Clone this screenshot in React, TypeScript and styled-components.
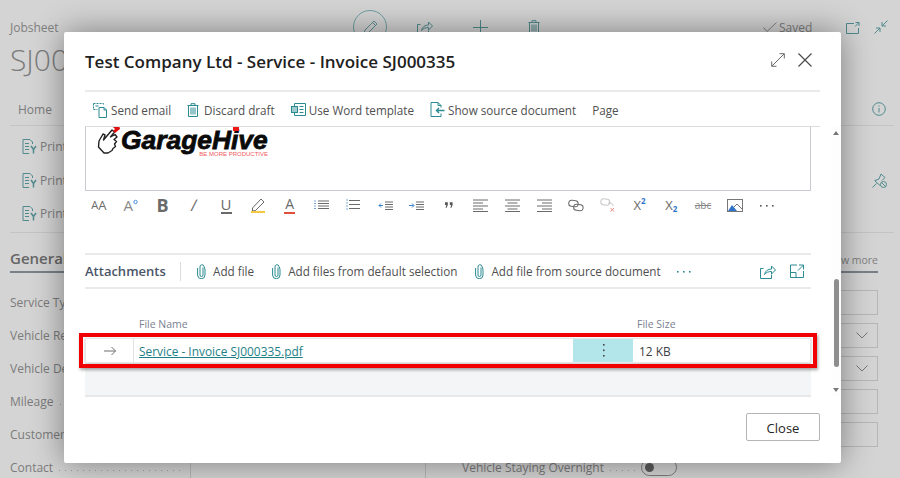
import React from "react";
import styled, { createGlobalStyle } from "styled-components";

const TEAL = "#2b8a92";
const MUTED_TEAL = "#4f8a8e";
const GREY = "#6a6a6a";

const GlobalStyle = createGlobalStyle`
  html, body {
    margin: 0;
    padding: 0;
    background: #d4d4d4;
  }
  body {
    font-family: "Open Sans", "Noto Sans", sans-serif;
    width: 900px;
    height: 478px;
    overflow: hidden;
  }
  * {
    box-sizing: border-box;
  }
`;

/* dimmed page behind the dialog */
const Page = styled.div`
  width: 900px;
  height: 478px;
  overflow: hidden;
  padding: 0 0 0 10px;
  color: #7b7b7b;
  font-size: 12px;
`;

const TopBar = styled.div`
  height: 54px;
  display: flex;
  align-items: center;
`;

const Crumb = styled.div`
  width: 343px;
  color: #808080;
`;

const EditCircle = styled.div`
  width: 34px;
  height: 34px;
  border-radius: 50%;
  border: 1px solid #6fa0a3;
  display: flex;
  align-items: center;
  justify-content: center;
  margin-right: 30px;
`;

const TopIcon = styled.div<{ $gap: number }>`
  display: flex;
  margin-right: ${(p) => p.$gap}px;
`;

const SavedText = styled.div`
  display: flex;
  align-items: center;
  gap: 2px;
  color: #808080;
  margin-right: 34px;
`;

const DocTitle = styled.div`
  font-size: 30px;
  line-height: 30px;
  font-weight: 300;
  color: #7c7c7c;
  height: 38px;
  margin-top: -9px;
`;

const Tabs = styled.div`
  height: 43px;
  width: 884px;
  border-bottom: 1px solid #c4c4c4;
  display: flex;
  align-items: center;
  justify-content: space-between;
  padding: 10px 8px 0 8px;
`;

const PrintList = styled.div`
  height: 107px;
  width: 884px;
  border-bottom: 1px solid #c4c4c4;
  display: flex;
  align-items: flex-start;
  justify-content: space-between;
  padding: 4px 7px 0 12px;
`;

const PrintCol = styled.div`
  display: flex;
  flex-direction: column;
`;

const PrintRow = styled.div`
  height: 33.5px;
  display: flex;
  align-items: center;
  gap: 3px;
`;

const PinWrap = styled.div`
  padding-top: 43px;
  display: flex;
`;

const SectionHead = styled.div`
  width: 868px;
  height: 40px;
  display: flex;
  justify-content: space-between;
  align-items: flex-end;
`;

const SectionTitle = styled.div`
  font-size: 15px;
  font-weight: 600;
  color: #666;
  border-bottom: 2px solid #7a808a;
  height: 31px;
  padding-top: 6px;
  width: 60px;
  white-space: nowrap;
`;

const ShowMore = styled.div`
  font-size: 10.5px;
  color: #808080;
  border-bottom: 2px solid #7a808a;
  height: 26px;
  padding-top: 6px;
`;

const FormGrid = styled.div`
  display: grid;
  grid-template-columns: 416px 416px;
  grid-auto-rows: 33px;
  column-gap: 36px;
  width: 868px;
  margin-top: 13px;
`;

const Field = styled.div`
  display: flex;
  align-items: center;
  height: 33px;
`;

const FieldLabel = styled.div`
  white-space: nowrap;
  flex: none;
`;

const Dots = styled.div`
  flex: 1;
  height: 1px;
  margin: 5px 6px 0;
  background: repeating-linear-gradient(90deg, #a0a0a0 0 1px, transparent 1px 6px);
`;

const Input = styled.div`
  height: 25px;
  width: 236px;
  flex: none;
  border: 1px solid #b7b7b7;
  display: flex;
  align-items: center;
  justify-content: flex-end;
  padding-right: 9px;
`;

const Toggle = styled.div`
  width: 36px;
  height: 17px;
  border: 1px solid #7c7c7c;
  border-radius: 9px;
  margin-right: 201px;
  padding: 3px;
  flex: none;
`;

const Knob = styled.div`
  width: 9px;
  height: 9px;
  border-radius: 50%;
  background: #5c5c5c;
`;

/* dialog */
const Dialog = styled.div`
  position: absolute;
  left: 64px;
  top: 32px;
  width: 777px;
  height: 431px;
  background: #fff;
  border-radius: 2px;
  box-shadow: 0 0 32px rgba(0, 0, 0, 0.42);
  display: flex;
  flex-direction: column;
`;

const DialogHead = styled.div`
  height: 60px;
  margin: 0 21px;
  display: flex;
  align-items: center;
  justify-content: space-between;
  border-bottom: 2px solid #eaeaea;
`;

const DialogTitle = styled.div`
  font-size: 17px;
  font-weight: 600;
  color: #212121;
  white-space: nowrap;
`;

const HeadIcons = styled.div`
  display: flex;
  align-items: center;
  gap: 13px;
  padding: 0 8px 2px 0;
`;

const ActionBar = styled.div`
  height: 35px;
  margin: 0 21px;
  padding: 1px 0 0 7px;
  display: flex;
  align-items: center;
  gap: 16px;
  border-bottom: 1px solid #dcdcdc;
`;

const Action = styled.div<{ $gap?: number }>`
  display: flex;
  align-items: center;
  gap: ${(p) => p.$gap ?? 3}px;
  font-size: 11.7px;
  color: #505050;
  white-space: nowrap;
`;

const ScrollArea = styled.div`
  position: relative;
  height: 269px;
  padding: 0 30px 0 21px;
  flex: none;
`;

const Track = styled.div`
  position: absolute;
  right: 0;
  top: 0;
  bottom: 0;
  width: 10px;
  background: #fdfdfd;
`;

const ThumbBar = styled.div`
  position: absolute;
  left: 3px;
  top: 152px;
  width: 5px;
  height: 88px;
  border-radius: 3px;
  background: #8e8e8e;
`;

const TrackArrow = styled.div<{ $up?: boolean }>`
  position: absolute;
  left: 2px;
  ${(p) => (p.$up ? "top: 4px;" : "bottom: 4px;")}
  width: 0;
  height: 0;
  border-left: 3px solid transparent;
  border-right: 3px solid transparent;
  ${(p) =>
    p.$up ? "border-bottom: 4px solid #777;" : "border-top: 4px solid #777;"}
`;

const Editor = styled.div`
  height: 64px;
  border: 1px solid #c9c9cf;
  border-top: 0;
  padding-left: 11px;
  display: flex;
  align-items: flex-start;
`;

const Logo = styled.div`
  display: flex;
  align-items: flex-start;
`;

const LogoText = styled.div`
  position: relative;
  width: 147px;
  margin-left: -1px;
`;

const LogoWord = styled.div`
  font-family: "Liberation Sans", sans-serif;
  font-style: italic;
  font-weight: 700;
  font-size: 26.4px;
  line-height: 22px;
  margin-top: 2px;
  color: #0a0a0a;
  -webkit-text-stroke: 0.8px #0a0a0a;
  white-space: nowrap;
`;

const LogoDot = styled.div`
  position: absolute;
  left: 112px;
  top: 0;
  width: 6px;
  height: 4px;
  background: #f01616;
`;

const LogoTag = styled.div`
  font-family: "Liberation Sans", sans-serif;
  font-size: 6px;
  line-height: 6px;
  color: #f0585c;
  text-align: right;
  white-space: nowrap;
`;

const FormatBar = styled.div`
  display: flex;
  height: 28px;
  align-items: center;
  margin-left: -2px;
`;

const FormatCell = styled.div`
  width: 31.8px;
  height: 20px;
  flex: none;
  display: flex;
  align-items: center;
  justify-content: center;
`;

const Glyph = styled.span<{ $size: number; $weight?: number; $color?: string }>`
  font-size: ${(p) => p.$size}px;
  font-weight: ${(p) => p.$weight ?? 400};
  color: ${(p) => p.$color ?? GREY};
  line-height: 16px;
`;

const SlashGlyph = styled(Glyph)`
  transform: skewX(-8deg);
`;

const Stacked = styled.span`
  display: flex;
  flex-direction: column;
  align-items: center;
  line-height: 14px;
`;

const GlyphBar = styled.span<{ $color: string; $w: number }>`
  display: block;
  width: ${(p) => p.$w}px;
  height: 2px;
  background: ${(p) => p.$color};
`;

const Row = styled.span`
  display: flex;
  align-items: flex-end;
`;

const SmallBlue = styled.span<{ $low?: boolean }>`
  font-size: 8px;
  font-weight: 700;
  line-height: 8px;
  color: #2f74c9;
  align-self: ${(p) => (p.$low ? "flex-end" : "flex-start")};
`;

const StrikeGlyph = styled.span`
  font-size: 10px;
  line-height: 12px;
  color: #858585;
  text-decoration: line-through;
`;

const AttachSection = styled.div`
  margin-top: 34px;
  border-top: 2px solid #eaeaea;
`;

const AttachBar = styled.div`
  height: 34px;
  display: flex;
  align-items: center;
  border-bottom: 2px solid #eaeaea;
`;

const AttachTitle = styled.div`
  font-size: 13px;
  font-weight: 600;
  color: #4a5568;
  white-space: nowrap;
  width: 96px;
  border-right: 1px solid #dcdcdc;
  line-height: 19px;
  margin-right: 16px;
`;

const AttachItem = styled(Action)`
  margin-right: 18px;
`;

const MoreDots = styled.div`
  display: flex;
  margin-left: -2px;
`;

const BarRight = styled.div`
  margin-left: auto;
  display: flex;
  gap: 14px;
  padding-right: 7px;
`;

const ColumnHead = styled.div`
  height: 49px;
  display: grid;
  grid-template-columns: 54px 498px 1fr;
  font-size: 10.5px;
  color: #7a8190;
  align-items: end;
  padding-bottom: 7px;
`;

const HeadCell = styled.div`
  white-space: nowrap;
`;

const FileRow = styled.div`
  position: relative;
  height: 25px;
  display: grid;
  grid-template-columns: 48px 439px 60px 1fr;
  background: #fff;
  border: 1px solid #e6e6e6;
  font-size: 11.9px;
  box-shadow: 0 1px 3px rgba(0, 0, 0, 0.2);
`;

const ArrowCell = styled.div`
  display: flex;
  align-items: center;
  justify-content: center;
  border-right: 1px solid #e2e2e2;
`;

const NameCell = styled.div`
  display: flex;
  align-items: center;
  padding-left: 5px;
`;

const FileLink = styled.a`
  color: #1f7f87;
  text-decoration: underline;
  white-space: nowrap;
`;

const MenuCell = styled.div`
  background: #b2e6ea;
  display: flex;
  align-items: center;
  justify-content: center;
`;

const SizeCell = styled.div`
  display: flex;
  align-items: center;
  padding-left: 6px;
  color: #404040;
`;

/* red annotation drawn on top of the row */
const Highlight = styled.div`
  position: absolute;
  left: -7px;
  top: -6px;
  right: -7px;
  bottom: -6px;
  border: 4px solid #f00000;
  box-shadow: 1px 2px 3px rgba(0, 0, 0, 0.35);
  pointer-events: none;
`;

const EmptyRow = styled.div`
  height: 34px;
  background: #f4f5f6;
  border-bottom: 2px solid #e8e8e8;
`;

const DialogFoot = styled.div`
  flex: 1;
  display: flex;
  justify-content: flex-end;
  align-items: flex-start;
  padding: 17px 21px 0 0;
`;

const CloseButton = styled.button`
  width: 74px;
  height: 28px;
  background: #fff;
  border: 1px solid #b5b5b5;
  border-radius: 2px;
  font-family: inherit;
  font-size: 13px;
  font-weight: 500;
  color: #262626;
  padding: 1px 0 0;
`;

const Ico = styled.svg<{ $stroke?: string; $sw?: number }>`
  display: block;
  flex: none;
  fill: none;
  stroke: ${(p) => p.$stroke ?? TEAL};
  stroke-width: ${(p) => p.$sw ?? 1};
`;

/* icons */
const SendIcon = () => (
  <Ico width="16" height="16" viewBox="0 0 16 16">
    <path d="M7 5.5h5l2.5 2.5v7.5H7z" />
    <path d="M12 5.5V8h2.5" />
    <path d="M1.5 1.5h10v2M1.5 1.5v6h4" strokeDasharray="2 1" />
    <path d="M3.5 4h3" />
  </Ico>
);
const BinIcon = ({ stroke }: { stroke?: string }) => (
  <Ico $stroke={stroke} width="12" height="14" viewBox="0 0 12 14">
    <path d="M.5 2.5h11M4 2.5V.7h4v1.8" />
    <path d="M1.5 2.5v11h9v-11" />
    <path d="M4 4.5v7M6 4.5v7M8 4.5v7" />
  </Ico>
);
const WordIcon = () => (
  <Ico width="15" height="13" viewBox="0 0 15 13">
    <path d="M3.5 3V.5h11v12h-11V10" />
    <path d="M8.5 3.5h4M8.5 6.5h4M8.5 9.5h4" />
    <rect x=".5" y="3.5" width="6" height="6" fill={TEAL} fillOpacity=".45" />
  </Ico>
);
const SourceIcon = () => (
  <Ico width="15" height="15" viewBox="0 0 15 15">
    <path d="M1 .5h7l3 3v2M1 .5v14h10v-3" />
    <path d="M8 .5v3h3" />
    <path d="M14.5 8.5H6.5M9 6l-2.5 2.5L9 11" strokeWidth="1.4" />
  </Ico>
);
const ClipIcon = () => (
  <Ico width="9" height="15" viewBox="0 0 9 15">
    <path d="M6 3.5V11a1.5 1.5 0 0 1-3 0V3a2 2 0 0 1 4-.5c.6 1 1 2 1 3.5V11a3.7 3.7 0 0 1-7.4 0V4" />
  </Ico>
);
const ShareIcon = ({ stroke }: { stroke?: string }) => (
  <Ico $stroke={stroke} width="16" height="15" viewBox="0 0 16 15">
    <path d="M3.5 4.5h-3v10h11v-4" />
    <path d="M4.5 10.5c.5-3.5 3.5-5.5 7-5.5V2l4 4-4 4V7.5c-3 0-5.500 1-7 3z" />
  </Ico>
);
const WindowIcon = () => (
  <Ico $stroke={MUTED_TEAL} width="14" height="13" viewBox="0 0 14 13">
    <path d="M8 2.500H.5v10h12V7" />
    <path d="M9.500 1.500H13V5M13 1.500L9 5.500" />
  </Ico>
);
const PopoutIcon = () => (
  <Ico width="14" height="14" viewBox="0 0 14 14">
    <path d="M7 1H.5v12.500h13V7" />
    <path d="M.5 8.500H6v5" />
    <path d="M9 1h4.500v4.500M13.500 1L8 6.500" />
  </Ico>
);
const PrintIcon = () => (
  <Ico $stroke={MUTED_TEAL} width="15" height="15" viewBox="0 0 15 15">
    <path d="M1 .5h7L10.500 3v2M1 .5v14h6" />
    <path d="M3 4.500h4M3 7.500h4M3 10.500h4" />
    <path d="M9 7l2.500 3.500L14 7M11.500 10.500v4" strokeWidth="1.5" />
  </Ico>
);
const PencilIcon = () => (
  <Ico $stroke="#5b8f92" width="15" height="15" viewBox="0 0 15 15">
    <path d="M1 14l1-4 9-9 3 3-9 9z" />
    <path d="M9.500 2.500l3 3" />
  </Ico>
);
const PlusIcon = () => (
  <Ico $stroke={MUTED_TEAL} width="15" height="15" viewBox="0 0 15 15">
    <path d="M7.500 0v15M0 7.500h15" />
  </Ico>
);
const CheckIcon = () => (
  <Ico $stroke="#808080" width="14" height="10" viewBox="0 0 14 10">
    <path d="M.5 5.500L4 9.500 13.500.5" />
  </Ico>
);
const ShrinkIcon = () => (
  <Ico $stroke={MUTED_TEAL} width="14" height="14" viewBox="0 0 14 14">
    <path d="M8 6L13.500.5M8 2v4h4" />
    <path d="M6 8L.5 13.500M2 8h4v4" />
  </Ico>
);
const InfoIcon = () => (
  <Ico $stroke={MUTED_TEAL} width="14" height="14" viewBox="0 0 14 14">
    <circle cx="7" cy="7" r="6.3" />
    <path d="M7 6v4.500M7 3.500v1.200" />
  </Ico>
);
const PinIcon = () => (
  <Ico $stroke={MUTED_TEAL} width="15" height="15" viewBox="0 0 15 15">
    <path d="M.5 14.500l4-4M2.500 7.500l5.500 5M3 7.500L7 6l2-5 4 3.500-3 3" />
    <circle cx="11.500" cy="11.500" r="3" />
    <path d="M9.500 9.500l4 4" />
  </Ico>
);
const ChevronIcon = () => (
  <Ico $stroke="#777" width="12" height="7" viewBox="0 0 12 7">
    <path d="M.5.500L6 6l5.500-5.500" />
  </Ico>
);
const ExpandIcon = () => (
  <Ico $stroke="#6b6b6b" width="14" height="14" viewBox="0 0 14 14">
    <path d="M.8 13.200L13.200.8M8.500.7h4.800v4.800M.7 8.500v4.800h4.800" />
  </Ico>
);
const CloseIcon = () => (
  <Ico $stroke="#4a4a4a" $sw={1.2} width="14" height="14" viewBox="0 0 14 14">
    <path d="M.5.500l13 13M13.500.500l-13 13" />
  </Ico>
);
const ArrowIcon = () => (
  <Ico $stroke="#6e6e6e" width="12" height="10" viewBox="0 0 12 10">
    <path d="M0 5h11.500M7.500 1l4 4-4 4" />
  </Ico>
);
const VerticalDots = () => (
  <svg width="3" height="13" viewBox="0 0 3 13" style={{ display: "block" }}>
    <rect x="1" y="0" width="1.6" height="1.6" fill="#444" />
    <rect x="1" y="5.5" width="1.6" height="1.6" fill="#444" />
    <rect x="1" y="11" width="1.6" height="1.6" fill="#444" />
  </svg>
);
const HorizontalDots = ({ fill }: { fill: string }) => (
  <svg width="14" height="3" viewBox="0 0 14 3" style={{ display: "block" }}>
    <rect x="0" y="1" width="1.6" height="1.6" fill={fill} />
    <rect x="6" y="1" width="1.6" height="1.6" fill={fill} />
    <rect x="12" y="1" width="1.6" height="1.6" fill={fill} />
  </svg>
);

const HandLogo = () => (
  <svg width="25" height="28" viewBox="0 0 25 28" style={{ display: "block", flex: "none" }}>
    <path
      d="M2 14l4-7 2 1-1.500 5L15 3l2.500 2-4 5 4.500-2.500 2 2.500-3 2.500 2.500 2-2 2.500 1 2.500-2.500 2-1 2-4 2.500H7L1.500 20z"
      fill="#fff"
      stroke="#222"
      strokeWidth="1.4"
      strokeLinejoin="round"
    />
    <path d="M16 0h6.500l.5 2-5 4-2-2 2-2z" fill="#e01010" />
  </svg>
);

const AlignIcon = ({ d }: { d: string }) => (
  <Ico $stroke={GREY} width="15" height="13" viewBox="0 0 15 13">
    <path d={d} />
  </Ico>
);

const FormatIcons: React.ReactNode[] = [
  <Row>
    <Glyph $size={11}>A</Glyph>
    <Glyph $size={13}>A</Glyph>
  </Row>,
  <Row>
    <Glyph $size={15} $color="#8a8a8a">A</Glyph>
    <Ico $stroke="#4a90d9" width="5" height="14" viewBox="0 0 5 14">
      <circle cx="2.5" cy="3" r="1.7" />
    </Ico>
  </Row>,
  <Glyph $size={18} $weight={700}>B</Glyph>,
  <SlashGlyph $size={16}>/</SlashGlyph>,
  <Stacked>
    <Glyph $size={15}>U</Glyph>
    <GlyphBar $color={GREY} $w={11} />
  </Stacked>,
  <Stacked>
    <Ico $stroke={GREY} width="15" height="13" viewBox="0 0 15 13">
      <path d="M2.500 10L11 1l3 3-8.500 8.500-3 .5z" />
    </Ico>
    <GlyphBar $color="#f5c842" $w={14} />
  </Stacked>,
  <Stacked>
    <Glyph $size={14}>A</Glyph>
    <GlyphBar $color="#e0503c" $w={11} />
  </Stacked>,
  <Ico $stroke={GREY} width="15" height="11" viewBox="0 0 15 11">
    <path d="M4 1h11M4 3.500h11M4 6h11M4 8.500h11" />
    <path d="M0 1h2M0 3.500h2M0 6h2M0 8.500h2" stroke="#79a9d8" />
  </Ico>,
  <Ico $stroke={GREY} width="14" height="12" viewBox="0 0 14 12">
    <path d="M3 1.500h11M3 5.500h11M3 9.500h11" />
    <path d="M1 0v11.500" stroke="#79a9d8" strokeDasharray="2 1" />
  </Ico>,
  <Ico $stroke={GREY} width="15" height="9" viewBox="0 0 15 9">
    <path d="M7 1h8M7 3.500h8M7 6h8M7 8.500h8" />
    <path d="M5 4.500H1M3 2.500l-2 2 2 2" stroke="#3f83cc" />
  </Ico>,
  <Ico $stroke={GREY} width="15" height="9" viewBox="0 0 15 9">
    <path d="M7 1h8M7 3.500h8M7 6h8M7 8.500h8" />
    <path d="M0 4.500h4.500M3 2.500l2 2-2 2" stroke="#3f83cc" />
  </Ico>,
  <svg width="8" height="6" viewBox="0 0 10 7" style={{ display: "block" }}>
    <path d="M0 0h3.500v3.500L2 7H.7l1-3.500H0zM6 0h3.500v3.500L8 7H6.700l1-3.500H6z" fill="#555" />
  </svg>,
  <AlignIcon d="M0 1h15M0 4h10M0 7h15M0 10h10M0 12.500h15" />,
  <AlignIcon d="M0 1h15M2.500 4h10M0 7h15M2.500 10h10M0 12.500h15" />,
  <AlignIcon d="M0 1h15M5 4h10M0 7h15M5 10h10M0 12.500h15" />,
  <Ico $stroke={GREY} width="16" height="13" viewBox="0 0 16 13">
    <rect x=".8" y="1.500" width="9.500" height="6" rx="3" transform="rotate(8 5 4)" />
    <rect x="5.700" y="5.500" width="9.500" height="6" rx="3" transform="rotate(8 10 8)" />
  </Ico>,
  <Ico $stroke="#c9c9c9" width="16" height="14" viewBox="0 0 16 14">
    <rect x=".8" y="1" width="9" height="6" rx="3" transform="rotate(8 5 4)" />
    <path d="M8 5h3a3 3 0 0 1 2 3" />
    <path d="M10.500 10l3.500 3.500M14 10l-3.500 3.500" stroke="#e88b80" />
  </Ico>,
  <Row>
    <Glyph $size={13}>X</Glyph>
    <SmallBlue>2</SmallBlue>
  </Row>,
  <Row>
    <Glyph $size={13}>X</Glyph>
    <SmallBlue $low>2</SmallBlue>
  </Row>,
  <StrikeGlyph>abc</StrikeGlyph>,
  <Ico $stroke="#777" width="16" height="13" viewBox="0 0 16 13">
    <rect x=".5" y=".5" width="15" height="12" />
    <path d="M1 12l4-6 5 6z" fill="#2f74c9" stroke="none" />
    <path d="M7 8l3-3 5 5" />
  </Ico>,
  <HorizontalDots fill="#555" />,
];

const leftFields = ["Service Type", "Vehicle Reg", "Vehicle Desc", "Mileage", "Customer", "Contact"];

export default function App() {
  return (
    <>
      <GlobalStyle />
      <Page>
        <TopBar>
          <Crumb>Jobsheet</Crumb>
          <EditCircle>
            <PencilIcon />
          </EditCircle>
          <TopIcon $gap={40}>
            <ShareIcon stroke={MUTED_TEAL} />
          </TopIcon>
          <TopIcon $gap={40}>
            <PlusIcon />
          </TopIcon>
          <TopIcon $gap={223}>
            <BinIcon stroke={MUTED_TEAL} />
          </TopIcon>
          <SavedText>
            <CheckIcon />
            Saved
          </SavedText>
          <TopIcon $gap={14}>
            <WindowIcon />
          </TopIcon>
          <TopIcon $gap={0}>
            <ShrinkIcon />
          </TopIcon>
        </TopBar>
        <DocTitle>SJ000335</DocTitle>
        <Tabs>
          <span>Home</span>
          <InfoIcon />
        </Tabs>
        <PrintList>
          <PrintCol>
            {[0, 1, 2].map((n) => (
              <PrintRow key={n}>
                <PrintIcon />
                Print
              </PrintRow>
            ))}
          </PrintCol>
          <PinWrap>
            <PinIcon />
          </PinWrap>
        </PrintList>
        <SectionHead>
          <SectionTitle>General</SectionTitle>
          <ShowMore>Show more</ShowMore>
        </SectionHead>
        <FormGrid>
          {leftFields.map((label, i) => (
            <React.Fragment key={label}>
              <Field>
                <FieldLabel>{label}</FieldLabel>
                <Dots />
                <Input />
              </Field>
              <Field>
                {i === 5 ? (
                  <>
                    <FieldLabel>Vehicle Staying Overnight</FieldLabel>
                    <Dots />
                    <Toggle>
                      <Knob />
                    </Toggle>
                  </>
                ) : (
                  <>
                    <Dots />
                    <Input>{(i === 1 || i === 2) && <ChevronIcon />}</Input>
                  </>
                )}
              </Field>
            </React.Fragment>
          ))}
        </FormGrid>
      </Page>

      <Dialog>
        <DialogHead>
          <DialogTitle>Test Company Ltd - Service - Invoice SJ000335</DialogTitle>
          <HeadIcons>
            <ExpandIcon />
            <CloseIcon />
          </HeadIcons>
        </DialogHead>
        <ActionBar>
          <Action>
            <SendIcon />
            Send email
          </Action>
          <Action $gap={5}>
            <BinIcon />
            Discard draft
          </Action>
          <Action>
            <WordIcon />
            Use Word template
          </Action>
          <Action>
            <SourceIcon />
            Show source document
          </Action>
          <Action>Page</Action>
        </ActionBar>
        <ScrollArea>
          <Track>
            <TrackArrow $up />
            <ThumbBar />
            <TrackArrow />
          </Track>
          <Editor>
            <Logo>
              <HandLogo />
              <LogoText>
                <LogoWord>GarageHive</LogoWord>
                <LogoDot />
                <LogoTag>BE MORE PRODUCTIVE</LogoTag>
              </LogoText>
            </Logo>
          </Editor>
          <FormatBar>
            {FormatIcons.map((icon, i) => (
              <FormatCell key={i}>{icon}</FormatCell>
            ))}
          </FormatBar>
          <AttachSection>
            <AttachBar>
              <AttachTitle>Attachments</AttachTitle>
              <AttachItem $gap={7}>
                <ClipIcon />
                Add file
              </AttachItem>
              <AttachItem $gap={7}>
                <ClipIcon />
                Add files from default selection
              </AttachItem>
              <AttachItem $gap={7}>
                <ClipIcon />
                Add file from source document
              </AttachItem>
              <MoreDots>
                <HorizontalDots fill={TEAL} />
              </MoreDots>
              <BarRight>
                <ShareIcon />
                <PopoutIcon />
              </BarRight>
            </AttachBar>
            <ColumnHead>
              <HeadCell />
              <HeadCell>File Name</HeadCell>
              <HeadCell>File Size</HeadCell>
            </ColumnHead>
            <FileRow>
              <ArrowCell>
                <ArrowIcon />
              </ArrowCell>
              <NameCell>
                <FileLink>Service - Invoice SJ000335.pdf</FileLink>
              </NameCell>
              <MenuCell>
                <VerticalDots />
              </MenuCell>
              <SizeCell>12 KB</SizeCell>
              <Highlight />
            </FileRow>
            <EmptyRow />
          </AttachSection>
        </ScrollArea>
        <DialogFoot>
          <CloseButton>Close</CloseButton>
        </DialogFoot>
      </Dialog>
    </>
  );
}
